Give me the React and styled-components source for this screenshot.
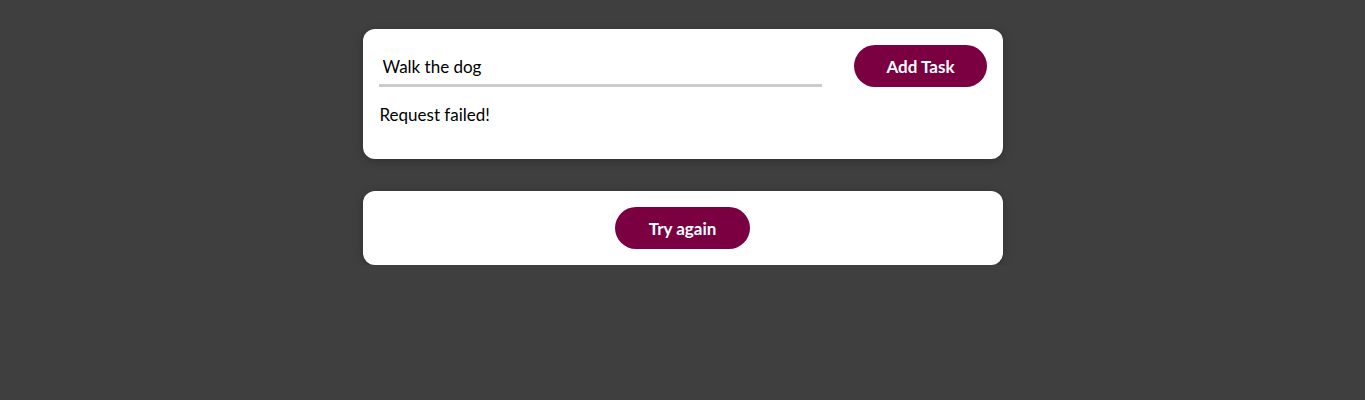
import React from 'react'
import styled, { createGlobalStyle } from 'styled-components'

const GlobalStyle = createGlobalStyle`
  * {
    box-sizing: border-box;
  }
  body {
    margin: 0;
    background: #3f3f3f;
    font-family: Lato, "Noto Sans", sans-serif;
  }
`

const Page = styled.main`
  display: flex;
  flex-direction: column;
  align-items: center;
  gap: 32px;
  padding-top: 29px;
`

const Card = styled.section`
  width: 640px;
  padding: 16px;
  background: white;
  border-radius: 12px;
  box-shadow: 0 2px 8px rgba(0, 0, 0, 0.25);
  display: flex;
  flex-direction: column;
  align-items: ${props => (props.center ? 'center' : 'stretch')};
`

const Form = styled.form`
  display: flex;
  align-items: center;
  gap: 32px;
`

const Input = styled.input`
  flex: 1;
  height: 42px;
  padding: 8px 4px 4px;
  border: none;
  border-bottom: 3px solid #cccccc;
  font: inherit;
  font-size: 17px;
  color: #000;
  outline: none;
`

const Button = styled.button`
  height: 42px;
  padding: 0 ${props => (props.wide ? '34px' : '32px')};
  border: none;
  border-radius: 21px;
  background: #7a0042;
  color: white;
  font: inherit;
  font-size: 17px;
  font-weight: 700;
  cursor: pointer;
`

const Message = styled.p`
  margin: 16px 0 16px 1px;
  font-size: 17px;
  line-height: 24px;
  color: #000;
`

export default function App() {
  return (
    <>
      <GlobalStyle />
      <Page>
        <Card>
          <Form onSubmit={e => e.preventDefault()}>
            <Input type='text' defaultValue='Walk the dog' />
            <Button type='submit'>Add Task</Button>
          </Form>
          <Message>Request failed!</Message>
        </Card>
        <Card center>
          <Button wide>Try again</Button>
        </Card>
      </Page>
    </>
  )
}
